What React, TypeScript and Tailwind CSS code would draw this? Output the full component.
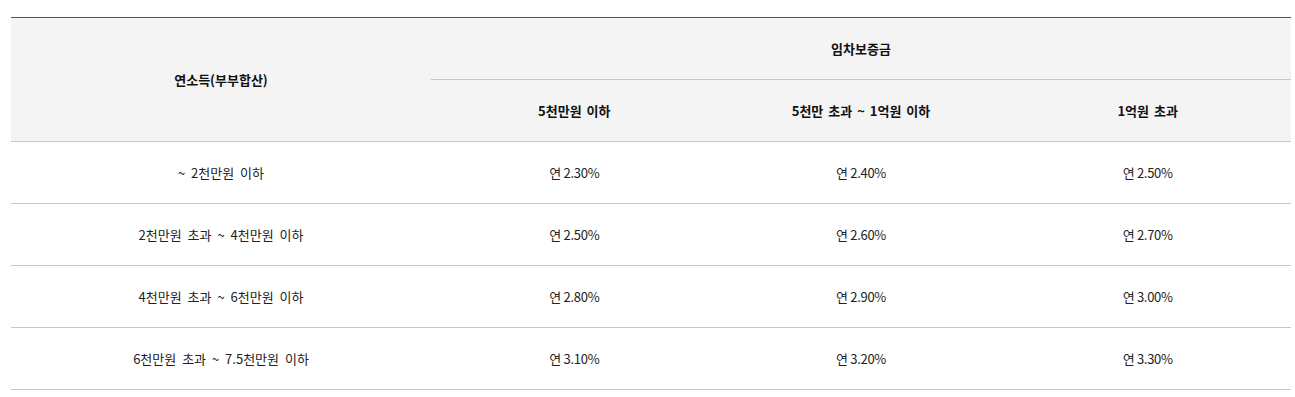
const rows = [
  { income: '~ 2천만원 이하', rates: ['연 2.30%', '연 2.40%', '연 2.50%'] },
  { income: '2천만원 초과 ~ 4천만원 이하', rates: ['연 2.50%', '연 2.60%', '연 2.70%'] },
  { income: '4천만원 초과 ~ 6천만원 이하', rates: ['연 2.80%', '연 2.90%', '연 3.00%'] },
  { income: '6천만원 초과 ~ 7.5천만원 이하', rates: ['연 3.10%', '연 3.20%', '연 3.30%'] },
];

const deposits = ['5천만원 이하', '5천만 초과 ~ 1억원 이하', '1억원 초과'];

export default function App() {
  return (
    <div className="min-h-screen bg-white pt-[17px] font-['Noto_Sans_CJK_KR','Noto_Sans',sans-serif] text-[13px] text-[#222]">
      <div className="ml-[11px] w-[1280px] border-t border-[#555]">
        {/* ── Header ─────────────────────────────── */}
        <div className="flex bg-[#f4f4f4] border-b border-[#c8c8c8] font-bold text-[#111] [word-spacing:2px]">
          <div className="w-[420px] h-[123px] flex items-center justify-center">
            연소득(부부합산)
          </div>
          <div className="flex-1 flex flex-col">
            <div className="h-[62px] flex items-center justify-center border-b border-[#c8c8c8]">
              임차보증금
            </div>
            <div className="h-[61px] grid grid-cols-3">
              {deposits.map(d => (
                <div key={d} className="flex items-center justify-center">
                  {d}
                </div>
              ))}
            </div>
          </div>
        </div>

        {/* ── Body ───────────────────────────────── */}
        {rows.map(r => (
          <div
            key={r.income}
            className="grid grid-cols-[420px_1fr_1fr_1fr] h-[62px] border-b border-[#c8c8c8]"
          >
            <div className="flex items-center justify-center [word-spacing:3px]">{r.income}</div>
            {r.rates.map((rate, i) => (
              <div key={i} className="flex items-center justify-center tracking-[-0.3px]">
                {rate}
              </div>
            ))}
          </div>
        ))}
      </div>
    </div>
  );
}
